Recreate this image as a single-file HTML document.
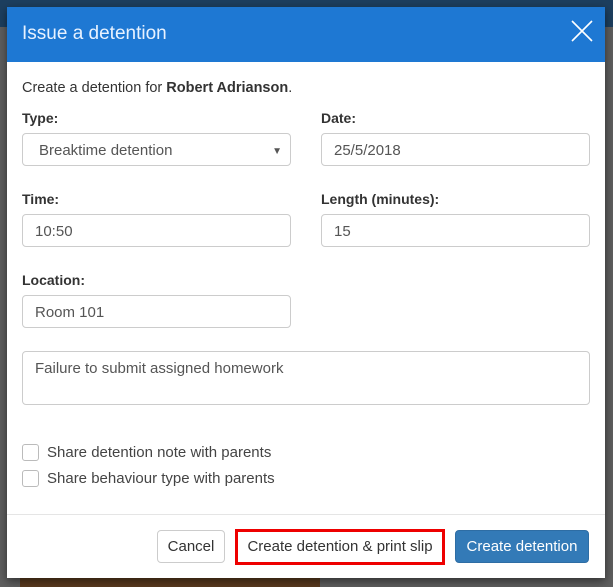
<!DOCTYPE html>
<html><head><style>
*{box-sizing:border-box;margin:0;padding:0}
body{width:613px;height:587px;overflow:hidden;background:#5f5f5f;font-family:"Liberation Sans",sans-serif;font-size:15px;color:#333;position:relative}
.top{position:absolute;left:0;top:0;width:613px;height:27px;background:#1d3f5f}
.strip{position:absolute;left:20px;top:570px;width:300px;height:17px;background:#5a3a1e}
.modal{position:absolute;left:7px;top:7px;width:598px;height:571px;background:#fff;box-shadow:0 3px 9px rgba(0,0,0,.5)}
.hdr{position:absolute;left:0;top:0;width:598px;height:55px;background:#1e78d3;color:#e8f2ff;font-size:19px;padding:16px 0 0 15px}
.x{position:absolute;right:12px;top:13px}
.a{position:absolute}
.lbl{position:absolute;font-weight:bold;color:#333;font-size:14px}
.in{position:absolute;border:1px solid #ccc;border-radius:4px;height:33px;padding:8px 12px 0;color:#555;background:#fff;line-height:17px}
.cb{position:absolute;width:17px;height:17px;border:1px solid #bbb;border-radius:3px}
.btn{position:absolute;height:33px;border-radius:4px;padding:0 8px;line-height:31px;text-align:center;white-space:nowrap}
</style></head><body>
<div class="top"></div>
<div class="strip"></div>
<div class="modal">
<div class="hdr">Issue a detention
<svg class="x" width="22" height="22" viewBox="0 0 22 22"><path d="M1 1L21 21M21 1L1 21" stroke="#fff" stroke-width="1.6"/></svg></div>
<div class="a" style="left:15px;top:73px;font-size:14.5px">Create a detention for <b>Robert Adrianson</b>.</div>
<div class="lbl" style="left:15px;top:103px">Type:</div>
<div class="lbl" style="left:314px;top:103px">Date:</div>
<div class="in" style="left:15px;top:126px;width:269px;padding-left:16px">Breaktime detention<span style="position:absolute;right:8px;top:9px;font-size:10px">▼</span></div>
<div class="in" style="left:314px;top:126px;width:269px">25/5/2018</div>
<div class="lbl" style="left:15px;top:184px">Time:</div>
<div class="lbl" style="left:314px;top:184px">Length (minutes):</div>
<div class="in" style="left:15px;top:207px;width:269px">10:50</div>
<div class="in" style="left:314px;top:207px;width:269px">15</div>
<div class="lbl" style="left:15px;top:265px">Location:</div>
<div class="in" style="left:15px;top:288px;width:269px">Room 101</div>
<div class="in" style="left:15px;top:344px;width:568px;height:54px;padding-top:8px">Failure to submit assigned homework</div>
<div class="cb" style="left:15px;top:437px"></div>
<div class="a" style="left:40px;top:437px;color:#444">Share detention note with parents</div>
<div class="cb" style="left:15px;top:463px"></div>
<div class="a" style="left:40px;top:463px;color:#444">Share behaviour type with parents</div>
<div class="a" style="left:0;top:507px;width:598px;border-top:1px solid #e5e5e5"></div>
<div class="btn" style="left:150px;top:523px;width:68px;border:1px solid #ccc">Cancel</div>
<div class="btn" style="left:228px;top:522px;width:210px;height:36px;border:3px solid #e00;border-radius:0;line-height:30px">Create detention &amp; print slip</div>
<div class="btn" style="left:448px;top:523px;width:134px;background:#337ab7;border:1px solid #2e6da4;color:#fff">Create detention</div>
</div>
</body></html>
